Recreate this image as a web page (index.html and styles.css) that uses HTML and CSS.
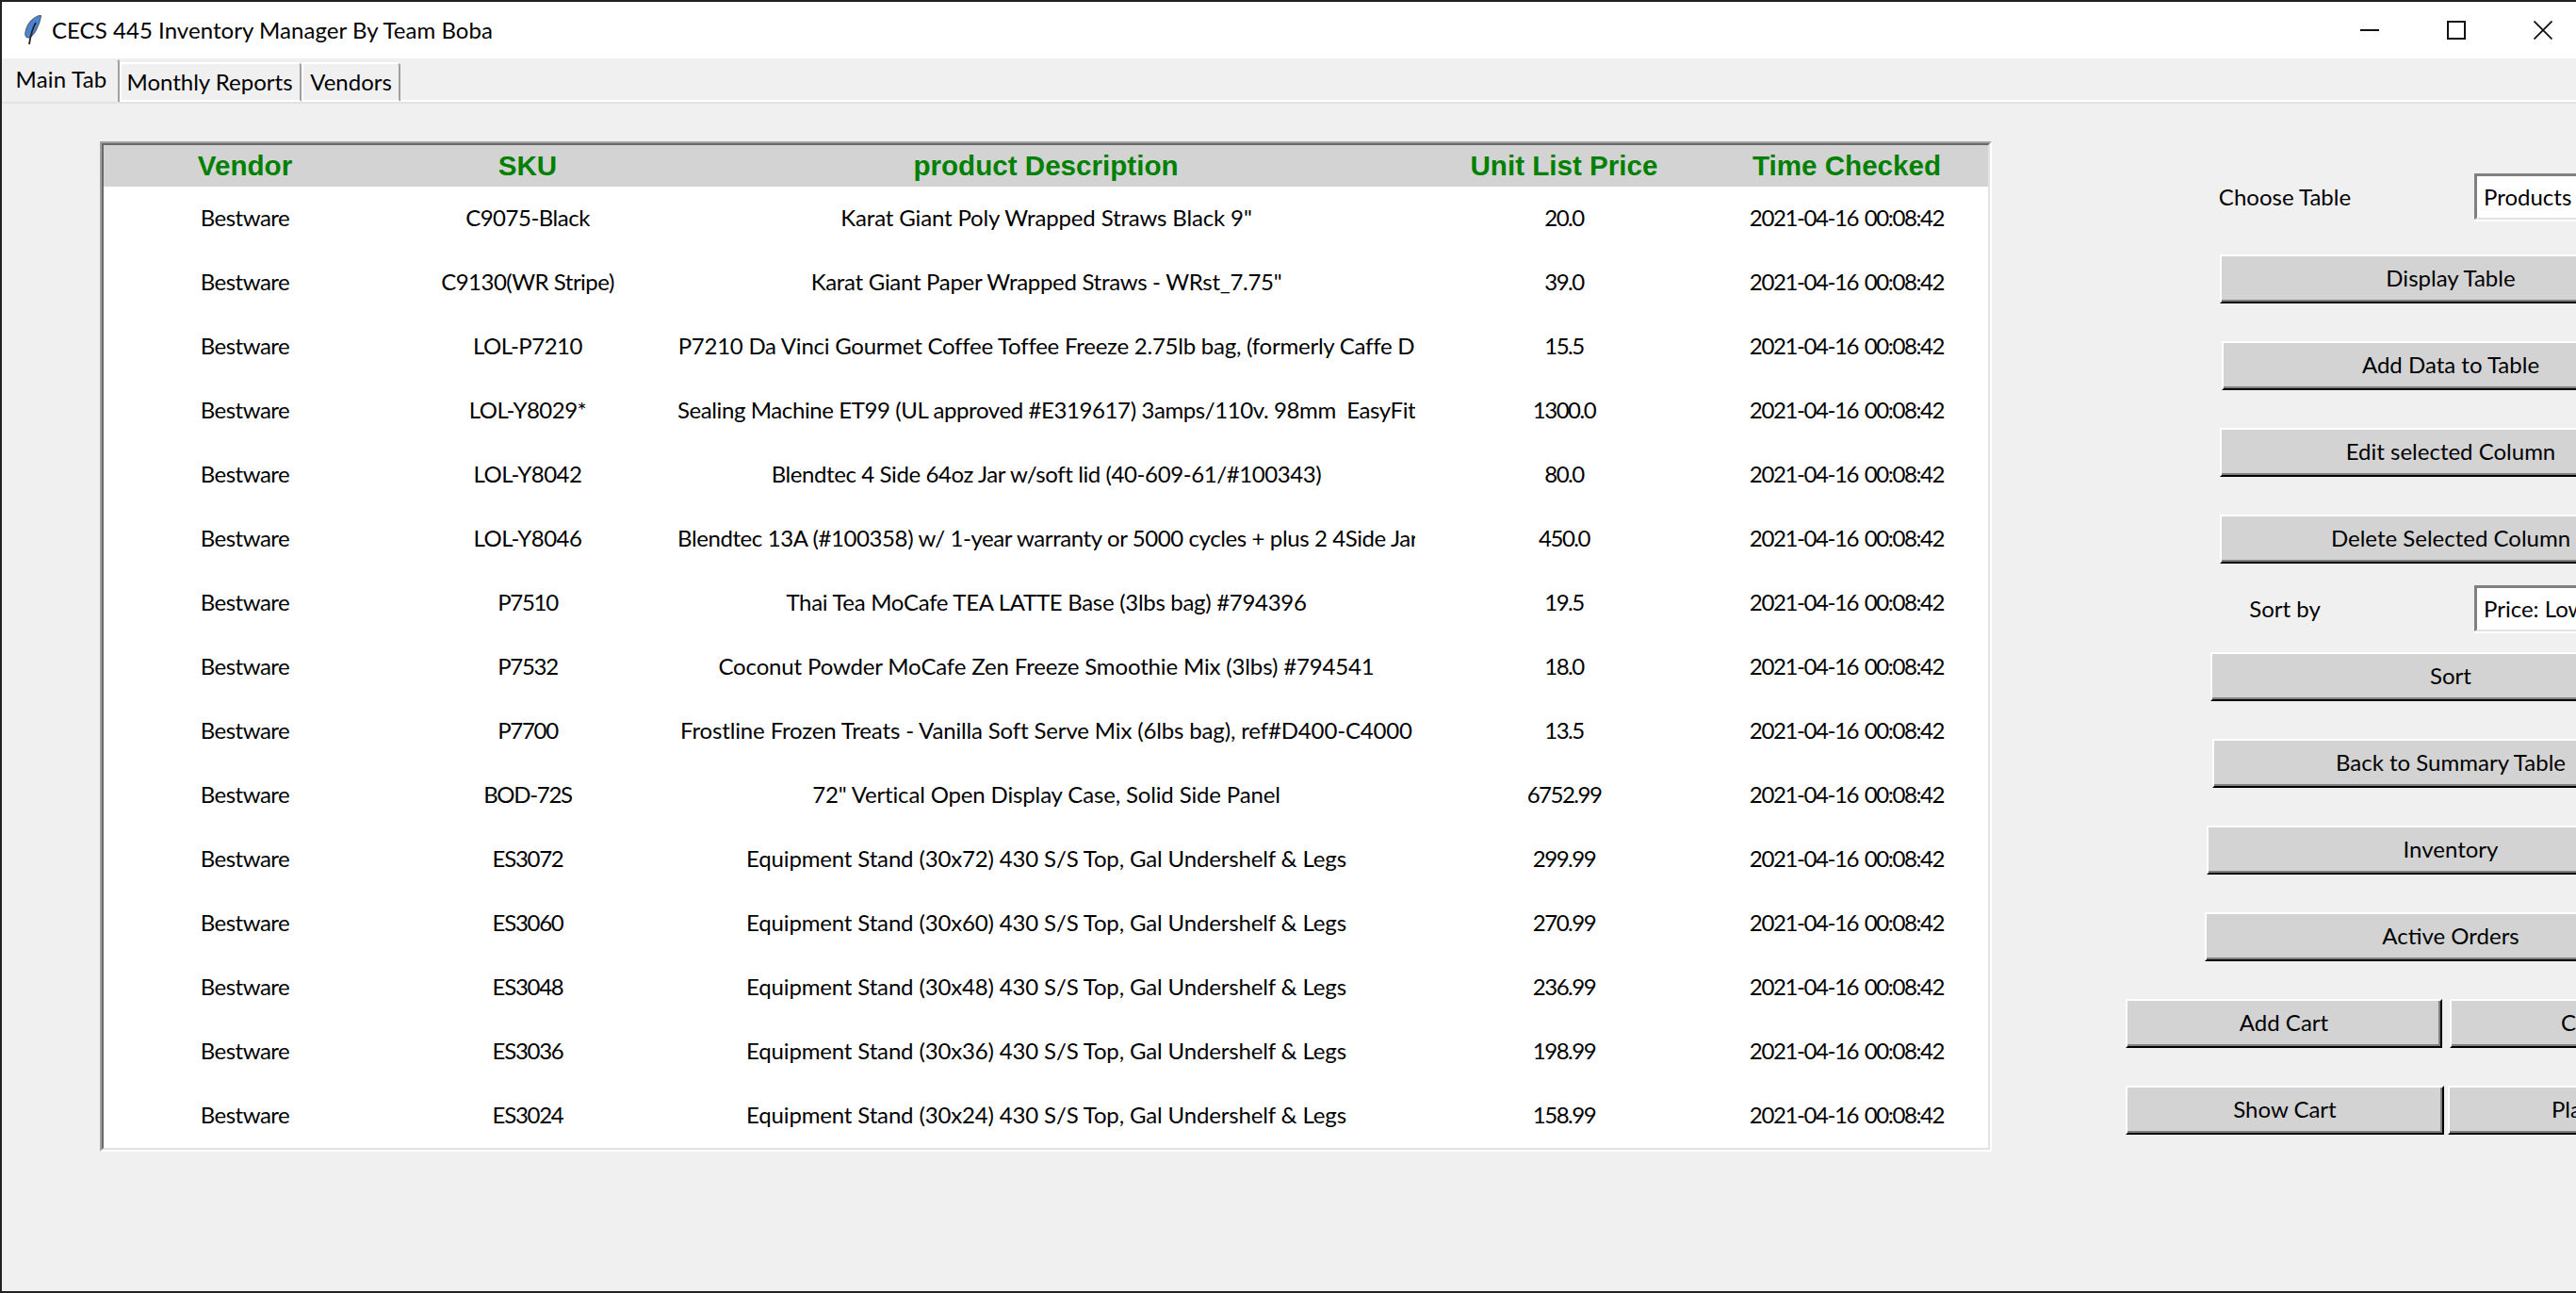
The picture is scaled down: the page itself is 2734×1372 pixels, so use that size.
FILE: index.html
```html
<!DOCTYPE html>
<html lang="en">
<head>
  <meta charset="UTF-8" />
  <title>CECS 445 Inventory Manager By Team Boba</title>
  <link rel="stylesheet" href="styles.css">
</head>

<body>
  <!-- TITLE BAR -->
  <header class="titlebar">
    <svg class="feather" viewBox="0 0 20 32" width="20" height="32">
      <path d="M18 0 C11 2 4 8 2 18 C1.4 21 2.4 24 5.5 24 C11 22 16.5 12 18.6 1 Z" fill="#4a86d4" stroke="#5b6470" stroke-width="1.2"/>
      <path d="M13 8 C10 13 8 18 6 31" fill="none" stroke="#20242c" stroke-width="1.8"/>
    </svg>
    <span class="title">CECS 445 Inventory Manager By Team Boba</span>
    <div class="win-controls">
      <span class="win-btn">
        <svg viewBox="0 0 20 20" width="20" height="20"><path d="M0 10 H20" stroke="#111" stroke-width="2"/></svg>
      </span>
      <span class="win-btn">
        <svg viewBox="0 0 20 20" width="20" height="20"><rect x="1" y="1" width="18" height="18" fill="none" stroke="#111" stroke-width="2"/></svg>
      </span>
      <span class="win-btn">
        <svg viewBox="0 0 20 20" width="20" height="20"><path d="M0.5 0.5 L19.5 19.5 M19.5 0.5 L0.5 19.5" stroke="#111" stroke-width="1.8"/></svg>
      </span>
    </div>
  </header>

  <!-- TABS -->
  <nav class="tabs">
    <span class="tab tab-main">Main Tab</span>
    <span class="tab tab-reports">Monthly Reports</span>
    <span class="tab tab-vendors">Vendors</span>
    <span class="tab-fill"></span>
  </nav>

  <main class="content">
    <!-- PRODUCTS TABLE -->
    <div class="frame">
      <table class="grid">
        <colgroup>
          <col class="col-s"><col class="col-s"><col class="col-l"><col class="col-s"><col class="col-s">
        </colgroup>
        <thead>
          <tr>
            <th>Vendor</th>
            <th>SKU</th>
            <th>product Description</th>
            <th>Unit List Price</th>
            <th>Time Checked</th>
          </tr>
        </thead>
        <tbody>
          <tr><td>Bestware</td><td>C9075-Black</td><td><div class="clip">Karat Giant Poly Wrapped Straws Black 9"</div></td><td>20.0</td><td class="time">2021-04-16 00:08:42</td></tr>
          <tr><td>Bestware</td><td>C9130(WR Stripe)</td><td><div class="clip snug">Karat Giant Paper Wrapped Straws - WRst_7.75"</div></td><td>39.0</td><td class="time">2021-04-16 00:08:42</td></tr>
          <tr><td>Bestware</td><td>LOL-P7210</td><td><div class="clip fit">P7210 Da Vinci Gourmet Coffee Toffee Freeze 2.75lb bag, (formerly Caffe D</div></td><td>15.5</td><td class="time">2021-04-16 00:08:42</td></tr>
          <tr><td>Bestware</td><td>LOL-Y8029*</td><td><div class="clip tight">Sealing Machine ET99 (UL approved #E319617) 3amps/110v. 98mm  EasyFit</div></td><td>1300.0</td><td class="time">2021-04-16 00:08:42</td></tr>
          <tr><td>Bestware</td><td>LOL-Y8042</td><td><div class="clip tight">Blendtec 4 Side 64oz Jar w/soft lid (40-609-61/#100343)</div></td><td>80.0</td><td class="time">2021-04-16 00:08:42</td></tr>
          <tr><td>Bestware</td><td>LOL-Y8046</td><td><div class="clip tight">Blendtec 13A (#100358) w/ 1-year warranty or 5000 cycles + plus 2 4Side Jars</div></td><td>450.0</td><td class="time">2021-04-16 00:08:42</td></tr>
          <tr><td>Bestware</td><td class="code">P7510</td><td><div class="clip snug">Thai Tea MoCafe TEA LATTE Base (3lbs bag) #794396</div></td><td>19.5</td><td class="time">2021-04-16 00:08:42</td></tr>
          <tr><td>Bestware</td><td class="code">P7532</td><td><div class="clip">Coconut Powder MoCafe Zen Freeze Smoothie Mix (3lbs) #794541</div></td><td>18.0</td><td class="time">2021-04-16 00:08:42</td></tr>
          <tr><td>Bestware</td><td class="code">P7700</td><td><div class="clip">Frostline Frozen Treats - Vanilla Soft Serve Mix (6lbs bag), ref#D400-C4000</div></td><td>13.5</td><td class="time">2021-04-16 00:08:42</td></tr>
          <tr><td>Bestware</td><td class="code">BOD-72S</td><td><div class="clip">72" Vertical Open Display Case, Solid Side Panel</div></td><td>6752.99</td><td class="time">2021-04-16 00:08:42</td></tr>
          <tr><td>Bestware</td><td class="code">ES3072</td><td><div class="clip">Equipment Stand (30x72) 430 S/S Top, Gal Undershelf &amp; Legs</div></td><td>299.99</td><td class="time">2021-04-16 00:08:42</td></tr>
          <tr><td>Bestware</td><td class="code">ES3060</td><td><div class="clip">Equipment Stand (30x60) 430 S/S Top, Gal Undershelf &amp; Legs</div></td><td>270.99</td><td class="time">2021-04-16 00:08:42</td></tr>
          <tr><td>Bestware</td><td class="code">ES3048</td><td><div class="clip">Equipment Stand (30x48) 430 S/S Top, Gal Undershelf &amp; Legs</div></td><td>236.99</td><td class="time">2021-04-16 00:08:42</td></tr>
          <tr><td>Bestware</td><td class="code">ES3036</td><td><div class="clip">Equipment Stand (30x36) 430 S/S Top, Gal Undershelf &amp; Legs</div></td><td>198.99</td><td class="time">2021-04-16 00:08:42</td></tr>
          <tr><td>Bestware</td><td class="code">ES3024</td><td><div class="clip">Equipment Stand (30x24) 430 S/S Top, Gal Undershelf &amp; Legs</div></td><td>158.99</td><td class="time">2021-04-16 00:08:42</td></tr>
        </tbody>
      </table>
    </div>

    <!-- CONTROLS -->
    <aside class="panel">
      <div class="pick pick-table">
        <label class="pick-label">Choose Table</label>
        <div class="entry">Products</div>
      </div>
      <button class="btn btn-display">Display Table</button>
      <button class="btn btn-add">Add Data to Table</button>
      <button class="btn btn-display">Edit selected Column</button>
      <button class="btn btn-display btn-tight">Delete Selected Column</button>
      <div class="pick pick-sort">
        <label class="pick-label">Sort by</label>
        <div class="entry">Price: Low to High</div>
      </div>
      <button class="btn btn-sort">Sort</button>
      <button class="btn btn-back">Back to Summary Table</button>
      <button class="btn btn-inventory">Inventory</button>
      <button class="btn btn-orders">Active Orders</button>
      <div class="cart-row cart-row-a">
        <button class="btn btn-cart">Add Cart</button>
        <button class="btn btn-cart-r">Clear Cart</button>
      </div>
      <div class="cart-row cart-row-b">
        <button class="btn btn-cart">Show Cart</button>
        <button class="btn btn-cart-r">Place Order</button>
      </div>
    </aside>
  </main>
</body>
</html>
```

FILE: styles.css
```css
* { box-sizing: border-box; }

html, body { margin: 0; height: 100%; }

body {
  height: 1372px;
  overflow: hidden;
  background: #f0f0f0;
  border-top: 2px solid #222;
  border-left: 2px solid #222;
  border-bottom: 2px solid #222;
  font-family: "Lato", "Noto Sans", sans-serif;
  font-size: 24px;
  color: #000;
}

/* title bar */
.titlebar { display: flex; align-items: center; height: 60px; background: #fff; padding-left: 23px; }
.feather { flex: none; margin-right: 10px; }
.title { white-space: nowrap; padding-bottom: 2px; letter-spacing: 0.05px; }
.win-controls { display: flex; margin-left: auto; margin-right: -11px; }
.win-btn { display: flex; align-items: center; justify-content: center; width: 92px; height: 60px; }

/* tabs */
.tabs { display: flex; align-items: flex-end; height: 48px; border-bottom: 2px solid #e3e3e3; padding-left: 1px; }
.tab { display: flex; align-items: center; justify-content: center; height: 42px; padding-bottom: 2px; background: #f0f0f0; white-space: nowrap;
       border-top: 2px solid #fff; border-left: 2px solid #fff; border-right: 2px solid #a0a0a0; border-bottom: 2px solid #fff; border-top-right-radius: 4px; }
.tab-main { width: 124px; height: 46px; padding-bottom: 5px; letter-spacing: 0.2px; border-top-color: #f0f0f0; border-left-color: #f0f0f0; border-bottom: none; }
.tab-reports { width: 193px; padding-right: 2px; }
.tab-vendors { width: 105px; }
.tab-fill { flex: 1; border-bottom: 2px solid #fff; }

/* main area */
.content { display: flex; align-items: flex-start; padding: 40px 0 0 104px; }

.frame { flex: none; border: 2px solid; border-color: #a0a0a0 #fff #fff #a0a0a0; }

.grid { width: 2004px; table-layout: fixed; border-collapse: separate; border-spacing: 0; background: #fff;
        border: 2px solid; border-color: #696969 #e3e3e3 #e3e3e3 #696969; }
.col-s { width: 300px; }
.col-l { width: 800px; }
th { height: 44px; padding: 0; background: #d3d3d3; color: #008000; font: bold 29.6px "Liberation Sans", Arial, sans-serif; }
td { height: 68px; padding: 0 0 3px; text-align: center; white-space: nowrap; letter-spacing: -0.5px; }
td:nth-child(4) { letter-spacing: -1.5px; }
td.code { letter-spacing: -1.3px; }
td.time { letter-spacing: -1.4px; word-spacing: 2px; }
.clip { margin: 0 8px 0 9px; overflow: hidden; white-space: pre; text-align: center; letter-spacing: -0.15px; }
.fit { letter-spacing: -0.24px; }
.snug { letter-spacing: -0.3px; }
.tight { letter-spacing: -0.4px; }

/* right panel */
.panel { flex: none; display: flex; flex-direction: column; align-items: center; width: 690px; margin-left: 142px; padding-top: 34px; }

.pick { display: grid; grid-template-columns: 338px 1fr; column-gap: 32px; align-items: center; width: 100%; height: 49px; }
.pick-table { margin-bottom: 37px; }
.pick-sort { margin-bottom: 22px; }
.pick-label { text-align: center; padding-bottom: 1px; }
.entry { height: 49px; padding-left: 7px; line-height: 44px; white-space: nowrap; overflow: hidden; background: #fff;
         border: solid; border-width: 3px 2px 2px 3px; border-color: #808080 #e3e3e3 #e3e3e3 #808080; box-shadow: 0 2px 0 #fff; }

.btn { flex: none; height: 52px; margin: 0 0 40px; padding: 0 0 3px; background: #d3d3d3; color: #000; font: inherit; white-space: nowrap;
       border: 2px solid; border-color: #fff #000 #000 #fff; box-shadow: inset -2px -2px 0 #808080; }
.btn-tight { margin-bottom: 23px; }
.btn-display { width: 490px; }
.btn-add { width: 486px; }
.btn-sort { width: 510px; }
.btn-back { width: 506px; }
.btn-inventory { width: 518px; }
.btn-orders { width: 522px; }

.cart-row { display: flex; width: 100%; }
.cart-row-a { gap: 8px; }
.cart-row-a .btn-cart { width: 336px; }
.cart-row-a .btn-cart-r { width: 342px; }
.cart-row-b { gap: 4px; }
.cart-row-b .btn-cart { width: 338px; }
.cart-row-b .btn-cart-r { width: 344px; }
```
